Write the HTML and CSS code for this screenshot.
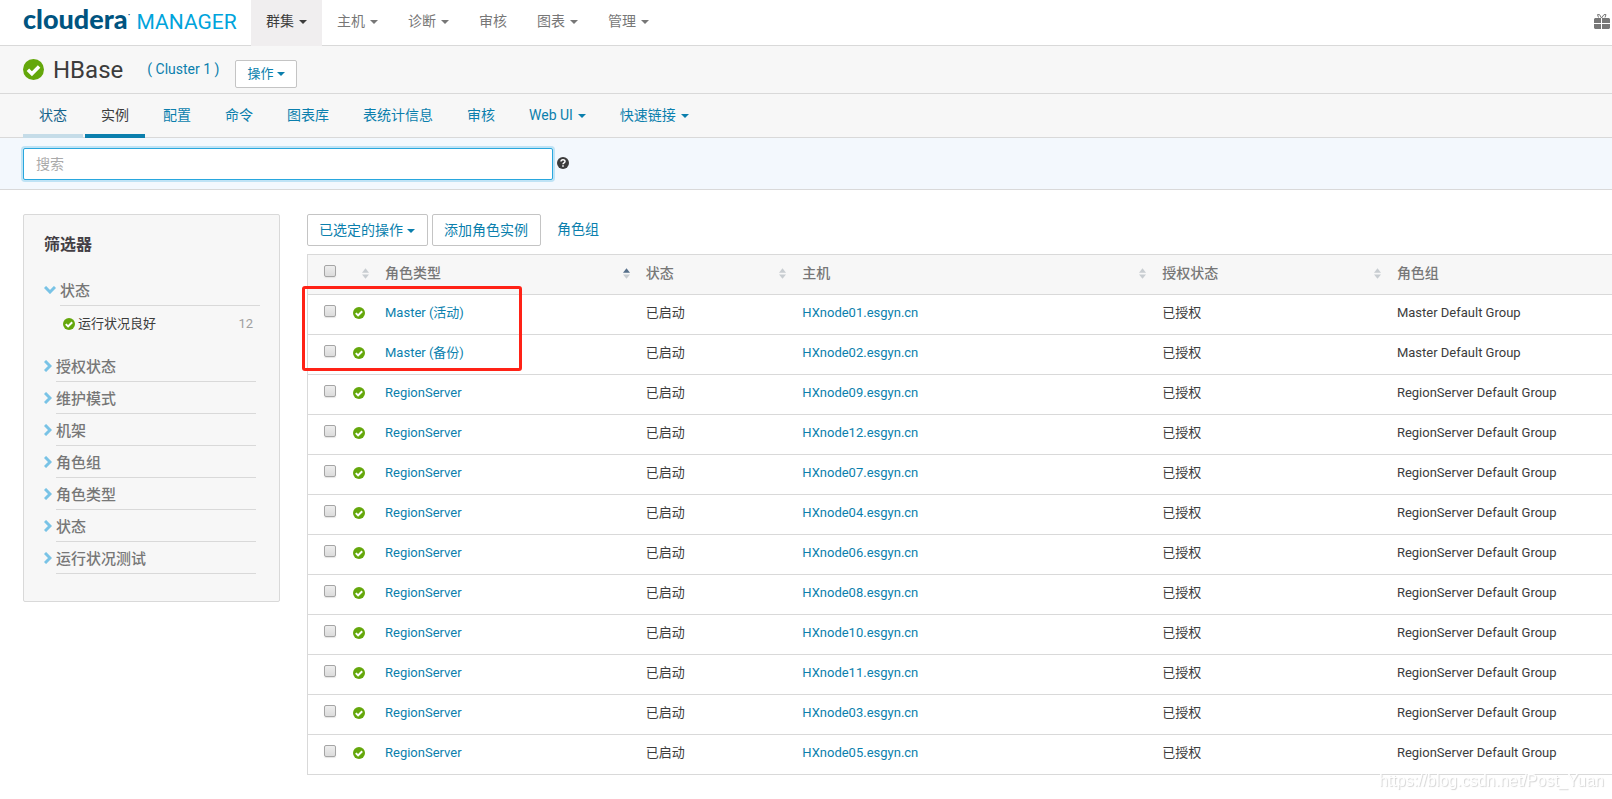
FILE: index.html
```html
<!DOCTYPE html>
<html lang="zh-CN">
<head>
<meta charset="utf-8">
<title>HBase - Cloudera Manager</title>
<link rel="stylesheet" href="styles.css">
</head>
<body>
<svg class="defs" aria-hidden="true">
  <symbol id="ok" viewBox="0 0 24 24"><circle cx="12" cy="12" r="12" fill="#64a70b"/><path d="M5.6 12.200l4.600 4.600 8.200-8.200" fill="none" stroke="#fff" stroke-width="4"/></symbol>
  <symbol id="sort" viewBox="0 0 8 12"><path class="up" d="M4 0l4 5H0z"/><path class="down" d="M4 12l4-5H0z"/></symbol>
  <symbol id="right" viewBox="0 0 8 12"><path d="M1 1l5 5-5 5" fill="none" stroke="#79c3e6" stroke-width="3"/></symbol>
  <symbol id="down" viewBox="0 0 12 8"><path d="M1 1l5 5 5-5" fill="none" stroke="#79c3e6" stroke-width="3"/></symbol>
</svg>

<header class="topbar">
  <a class="logo" href="#"><span class="logo-name">cloudera</span><span class="logo-mark">·</span><span class="logo-product">MANAGER</span></a>
  <nav class="topnav">
    <a class="topnav-item active" href="#">群集<i class="caret"></i></a>
    <a class="topnav-item" href="#">主机<i class="caret"></i></a>
    <a class="topnav-item" href="#">诊断<i class="caret"></i></a>
    <a class="topnav-item" href="#">审核</a>
    <a class="topnav-item" href="#">图表<i class="caret"></i></a>
    <a class="topnav-item" href="#">管理<i class="caret"></i></a>
  </nav>
  <button class="gift" aria-label="Parcels"><svg width="16" height="16" viewBox="0 0 16 16" fill="#777"><path d="M1 4h6v5H0V5zM8 4h7l1 1v4H8zM0 10h7v5H1l-1-1zM8 10h8v4l-1 1H8z"/><path d="M7.500 4L5.500 .6H3.500L4.500 3.500M7.500 4L10 .6h2L11 3.500" fill="none" stroke="#777"/></svg></button>
</header>

<section class="service">
  <svg class="service-icon"><use href="#ok"/></svg>
  <h1 class="service-name">HBase</h1>
  <a class="cluster" href="#">( Cluster 1 )</a>
  <button class="btn btn-small">操作<i class="caret"></i></button>
</section>

<nav class="tabs">
  <a class="tab hovered" href="#">状态</a>
  <a class="tab current" href="#">实例</a>
  <a class="tab" href="#">配置</a>
  <a class="tab" href="#">命令</a>
  <a class="tab" href="#">图表库</a>
  <a class="tab" href="#">表统计信息</a>
  <a class="tab" href="#">审核</a>
  <a class="tab" href="#">Web UI<i class="caret"></i></a>
  <a class="tab" href="#">快速链接<i class="caret"></i></a>
</nav>

<form class="search">
  <input class="search-box" type="text" placeholder="搜索" aria-label="搜索">
  <svg class="help" viewBox="0 0 12 12"><circle cx="6" cy="6" r="6" fill="#3c3c3c"/><path d="M4 4.600c0-2.400 4-2.400 4-.2 0 1.500-2 1.400-2 2.800" fill="none" stroke="#fff" stroke-width="1.500"/><path d="M5.200 8.200h1.600v1.500H5.200z" fill="#fff"/></svg>
</form>

<div class="content">
  <aside class="filters">
    <h2 class="filters-title">筛选器</h2>
    <div class="filter open"><svg class="chev-down"><use href="#down"/></svg><h3 class="filter-name">状态</h3></div>
    <div class="facet"><svg class="ok"><use href="#ok"/></svg><span>运行状况良好</span><span class="count">12</span></div>
    <div class="filter"><svg class="chev-right"><use href="#right"/></svg><h3 class="filter-name">授权状态</h3></div>
    <div class="filter"><svg class="chev-right"><use href="#right"/></svg><h3 class="filter-name">维护模式</h3></div>
    <div class="filter"><svg class="chev-right"><use href="#right"/></svg><h3 class="filter-name">机架</h3></div>
    <div class="filter"><svg class="chev-right"><use href="#right"/></svg><h3 class="filter-name">角色组</h3></div>
    <div class="filter"><svg class="chev-right"><use href="#right"/></svg><h3 class="filter-name">角色类型</h3></div>
    <div class="filter"><svg class="chev-right"><use href="#right"/></svg><h3 class="filter-name">状态</h3></div>
    <div class="filter"><svg class="chev-right"><use href="#right"/></svg><h3 class="filter-name">运行状况测试</h3></div>
  </aside>

  <main class="main">
    <div class="actions">
      <button class="btn">已选定的操作<i class="caret"></i></button>
      <button class="btn">添加角色实例</button>
      <a class="action-link" href="#">角色组</a>
    </div>
    <div class="table-area">
      <table class="roles">
        <colgroup><col class="col-check"><col class="col-icon"><col class="col-type"><col class="col-state"><col class="col-host"><col class="col-auth"><col></colgroup>
        <thead><tr>
          <th class="check"><input type="checkbox" aria-label="全选"></th>
          <th><div class="head"><svg class="sort"><use href="#sort"/></svg></div></th>
          <th><div class="head">角色类型<svg class="sort asc"><use href="#sort"/></svg></div></th>
          <th><div class="head">状态<svg class="sort"><use href="#sort"/></svg></div></th>
          <th><div class="head">主机<svg class="sort"><use href="#sort"/></svg></div></th>
          <th><div class="head">授权状态<svg class="sort"><use href="#sort"/></svg></div></th>
          <th><div class="head">角色组</div></th>
        </tr></thead>
        <tbody id="rows"></tbody>
      </table>
      <div class="highlight"></div>
    </div>
  </main>
</div>
<div class="watermark">https://blog.csdn.net/Post_Yuan</div>
<script src="app.js"></script>
</body>
</html>
```
FILE: styles.css
```css
* { box-sizing: border-box; }

body {
  margin: 0;
  background: #fff;
  color: #3c3c3c;
  font: 13px/20px Roboto, "Noto Sans CJK SC", sans-serif;
}

a { color: #0b7fad; text-decoration: none; }
h1, h2, h3 { margin: 0; }
button { font: inherit; cursor: pointer; }
.defs { position: absolute; width: 0; height: 0; }

.caret {
  display: inline-block;
  margin-left: 5px;
  border: 4px solid transparent;
  border-top-color: currentColor;
  border-bottom: 0;
  vertical-align: middle;
}

.topbar {
  display: flex;
  height: 46px;
  padding-left: 23px;
  border-bottom: 1px solid #d9d9d9;
}
.logo {
  display: flex;
  width: 228px;
  align-items: baseline;
  padding-top: 3px;
  line-height: 32px;
}
.logo-name { color: #005480; font-family: Lato, sans-serif; font-size: 27px; font-weight: 900; }
.logo-mark { color: #005480; width: 9px; font-size: 12px; align-self: flex-start; line-height: 24px; }
.logo-product { color: #00a4dc; font-size: 21px; }
.topnav { display: flex; }
.topnav-item {
  height: 46px;
  padding: 0 15px;
  color: #777;
  font-size: 14px;
  line-height: 42px;
}
.topnav-item.active { background: #f0eeef; color: #3c3c3c; }
.gift {
  display: flex;
  margin-left: auto;
  padding: 14px 2px 0 0;
  border: 0;
  background: none;
}

.service {
  display: flex;
  align-items: center;
  height: 48px;
  padding-left: 23px;
  border-bottom: 1px solid #d9d9d9;
  background: #f7f7f7;
}
.service-icon { width: 21px; height: 21px; }
.service-name { margin: 0 24px 0 9px; font-size: 24px; font-weight: 400; line-height: 32px; }
.cluster { padding-bottom: 2px; font-size: 14px; }

.btn {
  height: 32px;
  padding: 0 12px 0 11px;
  border: 1px solid #c4c4c4;
  border-radius: 2px;
  background: #fff;
  color: #0b7fad;
  font-size: 14px;
  line-height: 26px;
  white-space: nowrap;
}
.btn .caret { margin-left: 4px; }
.btn-small { height: 28px; margin: 8px 0 0 16px; padding: 0 11px; font-size: 13px; line-height: 24px; }

.tabs {
  display: flex;
  gap: 2px;
  height: 44px;
  padding-left: 23px;
  border-bottom: 1px solid #d9d9d9;
  background: #f7f7f7;
}
.tab {
  height: 44px;
  padding: 0 16px;
  border-bottom: 4px solid transparent;
  font-size: 14px;
  line-height: 42px;
}
.tab.hovered { border-color: #c5dce8; color: #14628a; }
.tab.current { border-color: #0b7fad; color: #3c3c3c; }

.search {
  display: flex;
  align-items: center;
  gap: 4px;
  height: 52px;
  padding-left: 23px;
  border-bottom: 1px solid #d9d9d9;
  background: #f3f8fd;
}
.search-box {
  width: 530px;
  height: 32px;
  padding: 0 12px;
  border: 1px solid #29a7de;
  border-radius: 2px;
  outline: 0;
  box-shadow: 0 0 0 2px #bfe3f5;
  font: inherit;
  font-size: 14px;
}
.search-box::placeholder { color: #aaa; }
.help { width: 12px; height: 12px; margin-bottom: 2px; }

.content { display: flex; gap: 27px; padding: 24px 0 0 23px; }

.filters {
  flex: 0 0 257px;
  align-self: flex-start;
  padding: 18px 23px 27px 20px;
  border: 1px solid #d9d9d9;
  border-radius: 2px;
  background: #f7f7f7;
}
.filters-title { margin-bottom: 17px; font-size: 16px; font-weight: 700; line-height: 24px; color: #443f45; }
.filter { display: flex; align-items: center; gap: 4px; height: 32px; }
.filter.open { margin-right: -4px; }
.filter-name {
  flex: 1;
  height: 32px;
  border-bottom: 1px solid #d9d9d9;
  color: #777;
  font-size: 15px;
  font-weight: 500;
  line-height: 35px;
}
.chev-right { width: 8px; height: 12px; }
.chev-down { width: 12px; height: 8px; }
.facet { display: flex; align-items: center; gap: 3px; padding: 8px 3px 16px 19px; }
.count { margin-left: auto; color: #a0a0a0; }
.ok { display: block; width: 12px; height: 12px; }

.main { flex: 1; min-width: 0; }
.actions { display: flex; gap: 4px; margin-bottom: 8px; }
.action-link { padding: 0 12px; font-size: 14px; line-height: 30px; }
.table-area { position: relative; }

.roles {
  width: 100%;
  table-layout: fixed;
  border-left: 1px solid #d9d9d9;
  border-spacing: 0;
}
.col-check { width: 37px; }
.col-icon { width: 32px; }
.col-type { width: 20%; }
.col-state { width: 12%; }
.col-host { width: 27.6%; }
.col-auth { width: 18%; }
.roles th, .roles td {
  height: 40px;
  padding: 0 8px 3px;
  border-bottom: 1px solid #d9d9d9;
  text-align: left;
}
.roles th {
  height: 41px;
  border-top: 1px solid #d9d9d9;
  background: #f7f7f7;
  color: #777;
  font-size: 14px;
  font-weight: 500;
}
.roles .check { padding: 0 0 7px 16px; }
.head { display: flex; align-items: center; justify-content: space-between; min-height: 20px; }
.sort { width: 7px; height: 11px; margin-left: auto; fill: #c8cdd1; }
.asc { --up: #566f8a; }
.up { fill: var(--up, #c8cdd1); }

input[type="checkbox"] {
  display: block;
  width: 12px;
  height: 12px;
  margin: 0;
  border: 1px solid #a5a5a5;
  border-radius: 2px;
  background: linear-gradient(#ededed, #dcdcdc);
  box-shadow: 0 1px 1px #e4e4e4;
  appearance: none;
}

.highlight {
  position: absolute;
  top: 32px;
  left: -5px;
  width: 220px;
  height: 85px;
  border: 3px solid #ff2216;
  border-radius: 3px;
  pointer-events: none;
}
.watermark {
  position: fixed;
  right: 8px;
  bottom: 8px;
  color: #fff;
  font: 16px/20px "Liberation Sans", sans-serif;
  text-shadow: 1px 1px 1px #d4d4d4;
}
```
FILE: app.js
```js
const roles = [
  ["Master (活动)", "01", "Master"],
  ["Master (备份)", "02", "Master"],
  ...["09", "12", "07", "04", "06", "08", "10", "11", "03", "05"]
    .map((n) => ["RegionServer", n, "RegionServer"]),
];

document.getElementById("rows").innerHTML = roles.map(([type, n, group]) => `
  <tr>
    <td class="check"><input type="checkbox" aria-label="HXnode${n}"></td>
    <td><svg class="ok"><use href="#ok"/></svg></td>
    <td><a href="#">${type}</a></td>
    <td>已启动</td>
    <td><a href="#">HXnode${n}.esgyn.cn</a></td>
    <td>已授权</td>
    <td>${group} Default Group</td>
  </tr>`).join("");
```
